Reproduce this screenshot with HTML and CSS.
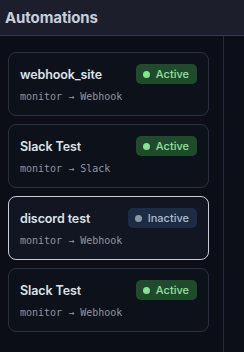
FILE: index.html
```html
<!DOCTYPE html>
<html>
<head>
<meta charset="utf-8">
<link rel="stylesheet" href="styles.css">
</head>
<body>
<header class="topbar"><h1 class="title">Automations</h1></header>
<div class="layout">
  <aside class="list">
    <div class="card">
      <div class="row"><span class="name">webhook_site</span><span class="badge on"><i class="dot"></i>Active</span></div>
      <div class="sub">monitor → Webhook</div>
    </div>
    <div class="card">
      <div class="row"><span class="name">Slack Test</span><span class="badge on"><i class="dot"></i>Active</span></div>
      <div class="sub">monitor → Slack</div>
    </div>
    <div class="card selected">
      <div class="row"><span class="name">discord test</span><span class="badge off"><i class="dot"></i>Inactive</span></div>
      <div class="sub">monitor → Webhook</div>
    </div>
    <div class="card">
      <div class="row"><span class="name">Slack Test</span><span class="badge on"><i class="dot"></i>Active</span></div>
      <div class="sub">monitor → Webhook</div>
    </div>
  </aside>
  <main class="detail"></main>
</div>
</body>
</html>
```
FILE: styles.css
```css
* { box-sizing: border-box; }
html, body { margin: 0; height: 100%; }
body {
  background: #0b0e16;
  font-family: Inter, "Noto Sans", sans-serif;
  overflow: hidden;
}
.topbar {
  height: 36px;
  background: #1c1f2b;
  border-bottom: 1px solid #363b4d;
  display: flex;
  align-items: center;
  padding-left: 5px;
}
.title {
  margin: 0;
  font-size: 15px;
  font-weight: 700;
  color: #c6cfde;
  letter-spacing: -0.1px;
}
.layout { display: flex; height: calc(100% - 36px); }
.list {
  width: 224px;
  border-right: 1px solid #262a38;
  padding: 16px 14px 0 8px;
  display: flex;
  flex-direction: column;
  gap: 8px;
}
.detail { flex: 1; background: #0c0f17; }
.card {
  height: 64px;
  border: 1px solid #2a2f3f;
  border-radius: 8px;
  background: #0d1119;
  padding: 11px;
  display: flex;
  flex-direction: column;
  gap: 6px;
}
.card.selected { border-color: #c9cdd6; background: #121622; }
.row {
  height: 20px;
  display: flex;
  align-items: center;
  justify-content: space-between;
}
.name {
  font-size: 12.5px;
  font-weight: 600;
  color: #dde2ea;
  letter-spacing: -0.1px;
}
.badge {
  height: 20px;
  border-radius: 5px;
  display: flex;
  align-items: center;
  font-size: 11px;
  font-weight: 500;
  padding: 0 8px 0 7px;
  gap: 6px;
}
.badge .dot { width: 7px; height: 7px; border-radius: 50%; display: block; }
.badge.on { background: #1f4a2b; color: #8fe29a; }
.badge.on .dot { background: #86e48f; }
.badge.off { background: #1d2c44; color: #aebbd0; }
.badge.off .dot { background: #8c96a8; }
.sub {
  height: 14px;
  line-height: 14px;
  font-family: "DejaVu Sans Mono", monospace;
  font-size: 10px;
  color: #8f96a3;
}
```
